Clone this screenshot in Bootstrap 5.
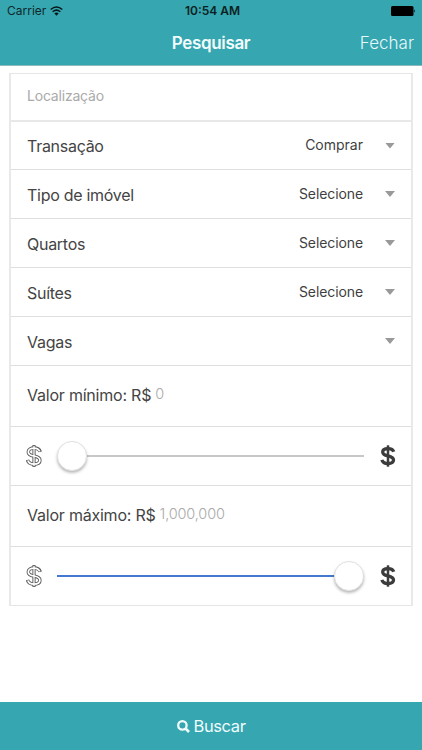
<!DOCTYPE html>
<html lang="pt-BR">
<head>
<meta charset="utf-8">
<meta name="viewport" content="width=device-width, initial-scale=1">
<title>Pesquisar</title>
<link rel="stylesheet" href="https://cdn.jsdelivr.net/npm/bootstrap@5.3.0/dist/css/bootstrap.min.css">
<style>
body{font-family:Inter,"Open Sans",sans-serif;color:#444;font-size:16px;line-height:20px}
.teal{background:#36a6b1}
.app-head{height:66px;border-bottom:1px solid #8cb9be}
.status{height:22px;font-size:12px;color:#10282b;padding:0 6px 0 7px;line-height:22px}
.clock{font-weight:600;color:#0b1f22;padding-left:2px}
.title-row{height:43px;line-height:43px;color:#fff}
.title-text{font-size:17px;font-weight:600;letter-spacing:-.35px;color:#f2fcfc}
.close-link{font-size:17px;font-weight:300;color:#e6f8f9;padding-right:8px}
.close-link:hover{color:#fff}
.filters{margin:7px 9px 0;border:1px solid #e6e6e6;border-left:2px solid #e9e9e9;border-right:2px solid #e9e9e9}
.line{border-bottom:1px solid #dedede;padding:0 16px}
.filters>.line:last-child{border-bottom:0}
.h-loc{height:48px;border-bottom:2px solid #e8e8e8;font-size:14px;color:#aaa;padding-bottom:2px;letter-spacing:-.2px}
.h48{height:48px}.h49{height:49px}
.h-val{height:61px;padding-bottom:3px}
.h59{height:59px}.h58{height:58px}
.lbl{padding-top:2px;letter-spacing:-.28px}
.h48 .lbl{padding-top:0}
.h48 .pick{padding-bottom:1px;letter-spacing:0}
.val{letter-spacing:-.22px}
.pick{font-size:14px;color:#3f3f3f;margin-right:22px;letter-spacing:-.1px}
.caret{width:10px;height:6px;background:#999;clip-path:polygon(0 0,100% 0,50% 100%)}
.ghost{font-size:14.5px;font-weight:300;color:#aaa;margin-left:4px;padding-bottom:1px;letter-spacing:-.15px}
.coin{margin-left:-1px;margin-right:15px}
.coin-end{margin-left:16px;margin-right:-1px}
.track{height:2px;background:#c8c8c8}
.track.full{background:#4479cf}
.knob{top:-14px;width:30px;height:30px;border-radius:50%;background:#fff;border:1px solid #e2e2e2;box-shadow:0 2px 3px rgba(0,0,0,.28)}
.knob.lo{left:0}.knob.hi{right:0}
.buscar{height:48px;color:#f0fcfc;font-size:16.500px;letter-spacing:-.4px}
</style>
<script src="https://cdn.jsdelivr.net/npm/bootstrap@5.3.0/dist/js/bootstrap.bundle.min.js"></script>
</head>
<body class="bg-white">
<svg class="d-none">
  <symbol id="dollar-open" viewBox="0 0 16 24">
    <g fill="none">
      <path d="M14.200 7.900C13.500 5.400 11.400 4.100 8 4.100 4.500 4.100 2.300 5.500 2.300 7.900 2.300 10.500 4.600 11.300 8 12 11.700 12.700 13.900 13.600 13.900 16.200 13.900 18.700 11.600 20.100 8 20.100 4.300 20.100 2.100 18.600 1.500 15.900" stroke="#5c5c5c" stroke-width="3.500"/>
      <path d="M8 1.100V22.900" stroke="#5c5c5c" stroke-width="3.200"/>
      <path d="M13.700 7.400C12.800 5.200 11 4.100 8 4.100 4.500 4.100 2.300 5.500 2.300 7.900 2.300 10.500 4.600 11.300 8 12 11.700 12.700 13.900 13.600 13.900 16.200 13.900 18.700 11.600 20.100 8 20.100 4.700 20.100 2.600 18.800 1.800 16.500" stroke="#fff" stroke-width="1.700"/>
      <path d="M8 2.100V21.900" stroke="#fff" stroke-width="1.300"/>
    </g>
  </symbol>
  <symbol id="dollar-bold" viewBox="0 0 16 24">
    <g fill="none" stroke="#3c3c3c">
      <path d="M13.700 7.800C13.100 5.700 11.200 4.600 8 4.600 4.700 4.600 2.700 5.800 2.700 7.900 2.700 10.200 4.800 11.100 8 11.800 11.500 12.600 13.500 13.500 13.500 16 13.500 18.200 11.400 19.500 8 19.500 4.600 19.500 2.500 18.200 1.900 15.800" stroke-width="3.300"/>
      <path d="M8 1.300V22.700" stroke-width="2.500"/>
    </g>
  </symbol>
</svg>
<div class="d-flex flex-column vh-100">
  <header class="app-head teal flex-shrink-0">
    <div class="status row g-0">
      <div class="col d-flex align-items-center">Carrier
        <svg class="ms-1" width="13" height="10" viewBox="0 0 13 10"><g fill="none" stroke="#06171a" stroke-width="1.500"><path d="M.7 3.500Q6.500-1.500 12.300 3.500M2.700 5.800Q6.500 2.500 10.300 5.800"/></g><path d="M4.300 7.300Q6.500 5.700 8.700 7.300L6.500 9.700Z" fill="#06171a"/></svg>
      </div>
      <div class="col-auto clock">10:54 AM</div>
      <div class="col d-flex align-items-center justify-content-end">
        <svg width="25" height="10" viewBox="0 0 25 10"><rect width="22.500" height="10" rx="1.500"/><path d="M23.300 3.300Q25 5 23.300 6.700Z"/></svg>
      </div>
    </div>
    <div class="title-row row g-0">
      <div class="col"></div>
      <div class="col-auto title-text">Pesquisar</div>
      <div class="col text-end"><a href="#" class="close-link text-decoration-none">Fechar</a></div>
    </div>
  </header>
  <main class="filters">
    <div class="line h-loc d-flex align-items-center"><span>Localização</span></div>
    <div class="line h48 d-flex align-items-center"><span class="lbl me-auto">Transação</span><span class="pick">Comprar</span><i class="caret"></i></div>
    <div class="line h49 d-flex align-items-center"><span class="lbl me-auto">Tipo de imóvel</span><span class="pick">Selecione</span><i class="caret"></i></div>
    <div class="line h49 d-flex align-items-center"><span class="lbl me-auto">Quartos</span><span class="pick">Selecione</span><i class="caret"></i></div>
    <div class="line h49 d-flex align-items-center"><span class="lbl me-auto">Suítes</span><span class="pick">Selecione</span><i class="caret"></i></div>
    <div class="line h49 d-flex align-items-center"><span class="lbl me-auto">Vagas</span><i class="caret"></i></div>
    <div class="line h-val d-flex align-items-center"><span class="val">Valor mínimo: R$</span><span class="ghost">0</span></div>
    <div class="line h59 d-flex align-items-center">
      <svg class="coin" width="16" height="24"><use href="#dollar-open"/></svg>
      <div class="track position-relative flex-fill"><div class="knob lo position-absolute"></div></div>
      <svg class="coin-end" width="16" height="24"><use href="#dollar-bold"/></svg>
    </div>
    <div class="line h-val d-flex align-items-center"><span class="val">Valor máximo: R$</span><span class="ghost">1,000,000</span></div>
    <div class="line h58 d-flex align-items-center">
      <svg class="coin" width="16" height="24"><use href="#dollar-open"/></svg>
      <div class="track full position-relative flex-fill"><div class="knob hi position-absolute"></div></div>
      <svg class="coin-end" width="16" height="24"><use href="#dollar-bold"/></svg>
    </div>
  </main>
  <footer class="mt-auto">
    <button class="buscar teal btn w-100 border-0 rounded-0 p-0 d-flex align-items-center justify-content-center gap-1">
      <svg width="13" height="13" viewBox="0 0 13 13" fill="none" stroke="#f0fcfc"><circle cx="5.400" cy="5.400" r="4.200" stroke-width="2.300"/><path d="M8.500 8.500L12 12" stroke-width="2.700"/></svg>
      <span>Buscar</span>
    </button>
  </footer>
</div>
</body>
</html>
